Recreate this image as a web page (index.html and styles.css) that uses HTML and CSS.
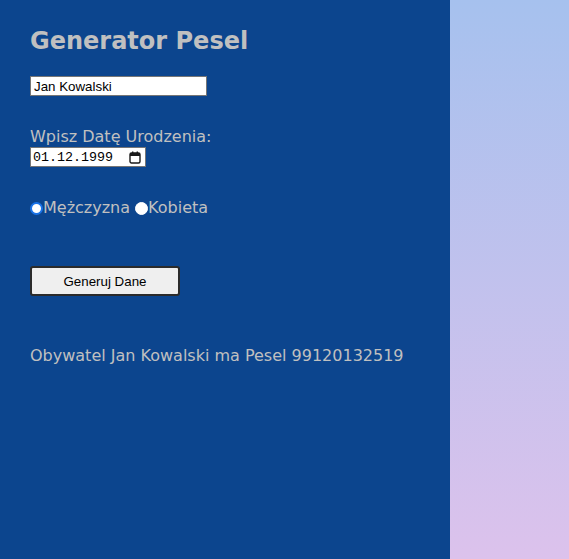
FILE: index.html
```html
<!DOCTYPE html>
<html lang="pl">
<head>
<meta charset="utf-8">
<title>Generator Pesel</title>
<link rel="stylesheet" href="styles.css">
</head>
<body>
<main class="panel">
  <h1 class="title">Generator Pesel</h1>
  <input class="name" type="text" value="Jan Kowalski">
  <label class="label" for="dob">Wpisz Datę Urodzenia:</label>
  <div class="date">
    <input class="date-text" id="dob" type="text" value="01.12.1999">
    <svg class="cal" width="12" height="13" viewBox="0 0 12 13" aria-hidden="true">
      <rect x="1" y="2" width="10" height="10" rx="1.5" fill="none" stroke="#1a1a1a" stroke-width="1.4"/>
      <rect x="1" y="2" width="10" height="3" fill="#1a1a1a"/>
      <rect x="3" y="0.5" width="1.4" height="2.5" fill="#1a1a1a"/>
      <rect x="7.6" y="0.5" width="1.4" height="2.5" fill="#1a1a1a"/>
    </svg>
  </div>
  <div class="gender">
    <label class="radio"><input type="radio" name="g" checked>Mężczyzna</label>
    <label class="radio second"><input type="radio" name="g">Kobieta</label>
  </div>
  <button class="btn" type="button">Generuj Dane</button>
  <p class="result">Obywatel Jan Kowalski ma Pesel 99120132519</p>
</main>
</body>
</html>
```
FILE: styles.css
```css
html, body {
  margin: 0;
  height: 100%;
}
body {
  background: linear-gradient(to bottom, #a6c1ee 0%, #dcc2ec 100%);
  font-family: Verdana, "DejaVu Sans", sans-serif;
  color: #c0c0c0;
}
.panel {
  width: 450px;
  height: 100%;
  box-sizing: border-box;
  background: #0c458e;
  padding: 27px 30px 0;
  display: flex;
  flex-direction: column;
  align-items: flex-start;
}
.title {
  margin: 0;
  font-size: 24px;
  font-weight: bold;
  line-height: 28px;
  color: #c0c0c0;
}
.name {
  margin-top: 21px;
  width: 177px;
  height: 20px;
  box-sizing: border-box;
  font-family: "Liberation Sans", Arial, sans-serif;
  font-size: 13.33px;
  border: 1px solid #767676;
  padding: 1px 3px;
}
.label {
  margin-top: 31px;
  font-size: 16px;
  line-height: 20px;
}
.date {
  width: 116px;
  height: 20px;
  box-sizing: border-box;
  border: 1px solid #767676;
  background: #fff;
  display: flex;
  align-items: center;
  padding: 0 4px 0 2px;
}
.date-text {
  flex: 1;
  min-width: 0;
  border: 0;
  padding: 0;
  margin: 0;
  background: transparent;
  font-family: "Liberation Mono", monospace;
  font-size: 13.33px;
  color: #000;
}
.cal {
  display: block;
}
.gender {
  margin-top: 31px;
  display: flex;
  font-size: 16px;
  line-height: 20px;
}
.radio {
  display: flex;
  align-items: center;
}
.radio.second {
  margin-left: 5px;
}
.radio input {
  appearance: none;
  margin: 0;
  width: 13px;
  height: 13px;
  border-radius: 50%;
  background: #fff;
  border: 1px solid #fff;
  box-sizing: border-box;
}
.radio input:checked {
  border: 2px solid #1a73e8;
  background: #fff;
}
.btn {
  margin-top: 48px;
  width: 150px;
  height: 30px;
  background: #efefef;
  border: 2px solid #2b2b2b;
  border-radius: 3px;
  font-family: "Liberation Sans", Arial, sans-serif;
  font-size: 13.33px;
  color: #000;
}
.result {
  margin: 50px 0 0;
  font-size: 16px;
  line-height: 20px;
}
```
